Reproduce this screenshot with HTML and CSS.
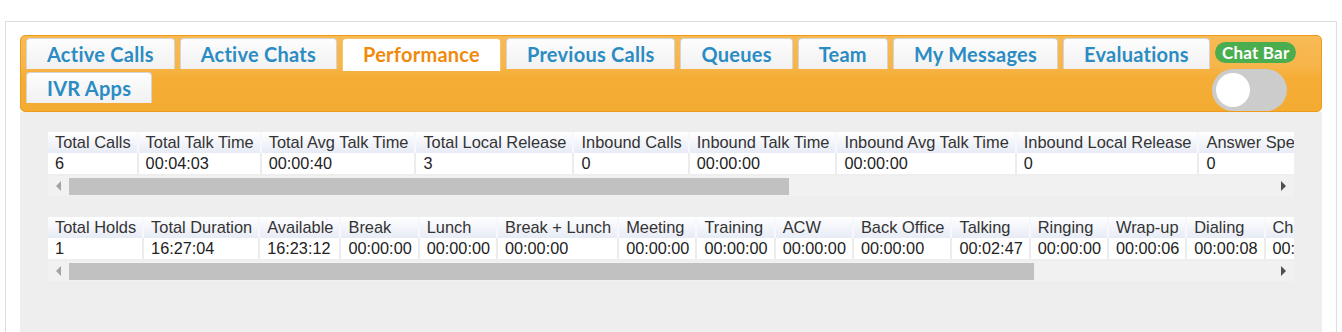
FILE: index.html
```html
<!DOCTYPE html>
<html lang="en">
<head>
    <meta charset="UTF-8">
    <meta name="viewport" content="width=device-width, initial-scale=1.0">
    <title>Agent Performance</title>
    <link rel="stylesheet" href="styles.css">
</head>
<body>
    <div class="frame">
        <div class="tabbar">
            <ul class="tabs">
                <li class="tab">Active Calls</li>
                <li class="tab">Active Chats</li>
                <li class="tab active">Performance</li>
                <li class="tab">Previous Calls</li>
                <li class="tab">Queues</li>
                <li class="tab">Team</li>
                <li class="tab">My Messages</li>
                <li class="tab">Evaluations</li>
                <li class="tab">IVR Apps</li>
            </ul>
            <div class="chatbar">
                <span class="chatbar-label">Chat Bar</span>
                <label class="switch"><span class="knob"></span></label>
            </div>
        </div>

        <div class="panel">
            <div class="grid">
                <div class="grid-body">
                    <table>
                        <tr>
                            <th>Total Calls</th>
                            <th>Total Talk Time</th>
                            <th>Total Avg Talk Time</th>
                            <th>Total Local Release</th>
                            <th>Inbound Calls</th>
                            <th>Inbound Talk Time</th>
                            <th>Inbound Avg Talk Time</th>
                            <th>Inbound Local Release</th>
                            <th>Answer Speed</th>
                        </tr>
                        <tr>
                            <td>6</td>
                            <td>00:04:03</td>
                            <td>00:00:40</td>
                            <td>3</td>
                            <td>0</td>
                            <td>00:00:00</td>
                            <td>00:00:00</td>
                            <td>0</td>
                            <td>0</td>
                        </tr>
                    </table>
                </div>
                <div class="scrollbar">
                    <span class="arrow left"></span>
                    <div class="track"><div class="thumb" style="width: 720px"></div></div>
                    <span class="arrow right"></span>
                </div>
            </div>

            <div class="grid">
                <div class="grid-body">
                    <table>
                        <tr>
                            <th>Total Holds</th>
                            <th>Total Duration</th>
                            <th>Available</th>
                            <th>Break</th>
                            <th>Lunch</th>
                            <th>Break + Lunch</th>
                            <th>Meeting</th>
                            <th>Training</th>
                            <th>ACW</th>
                            <th>Back Office</th>
                            <th>Talking</th>
                            <th>Ringing</th>
                            <th>Wrap-up</th>
                            <th>Dialing</th>
                            <th>Chat</th>
                        </tr>
                        <tr>
                            <td>1</td>
                            <td>16:27:04</td>
                            <td>16:23:12</td>
                            <td>00:00:00</td>
                            <td>00:00:00</td>
                            <td>00:00:00</td>
                            <td>00:00:00</td>
                            <td>00:00:00</td>
                            <td>00:00:00</td>
                            <td>00:00:00</td>
                            <td>00:02:47</td>
                            <td>00:00:00</td>
                            <td>00:00:06</td>
                            <td>00:00:08</td>
                            <td>00:00:00</td>
                        </tr>
                    </table>
                </div>
                <div class="scrollbar">
                    <span class="arrow left"></span>
                    <div class="track"><div class="thumb" style="width: 965px"></div></div>
                    <span class="arrow right"></span>
                </div>
            </div>
        </div>
    </div>
</body>
</html>
```

FILE: styles.css
```css
body {
    margin: 0;
    background: #fff;
    font-family: "Liberation Sans", Arial, sans-serif;
}

.frame {
    margin: 21px 5px 0 5px;
    border: 1px solid #dedede;
    border-bottom: none;
    padding: 13px 14px 0 14px;
    background: #fff;
}

/* orange tab strip */
.tabbar {
    display: flex;
    align-items: flex-start;
    padding: 2px 24px 0 5px;
    border: 1px solid #ec9b1c;
    border-radius: 5px;
    background: linear-gradient(to bottom, #f8ba55 0%, #f7b54a 40%, #f5ad36 55%, #f4ab32 100%);
}

.tabs {
    flex: 1;
    display: flex;
    flex-wrap: wrap;
    list-style: none;
    margin: 0;
    padding: 0 0 5px 0;
}

.tab {
    height: 30px;
    line-height: 30px;
    margin: 0 5px 3px 0;
    padding: 0 20px;
    border: 1px solid #d4d4d4;
    border-bottom: none;
    border-radius: 4px 4px 0 0;
    background: linear-gradient(to bottom, #fdfdfd, #f1f1f1);
    color: #2b8cc4;
    font-family: Lato, "Open Sans", sans-serif;
    font-weight: bold;
    font-size: 20px;
    letter-spacing: 0.25px;
    white-space: nowrap;
}

.tab.active {
    height: 32px;
    margin-bottom: 1px;
    background: #fff;
    border-color: #f3c46e;
    color: #f08a0b;
}

.chatbar {
    width: 82px;
    display: flex;
    flex-direction: column;
    align-items: flex-start;
}

.chatbar-label {
    margin-top: 4px;
    height: 21px;
    line-height: 21px;
    padding: 0 7px;
    border-radius: 11px;
    background: #4aae4e;
    color: #fff;
    font-family: Lato, "Open Sans", sans-serif;
    font-weight: bold;
    font-size: 17px;
    letter-spacing: 0.2px;
    white-space: nowrap;
}

.switch {
    display: flex;
    align-items: center;
    margin: 6px 0 0 -3px;
    width: 75px;
    height: 42px;
    border-radius: 21px;
    background: #cccccc;
}

.knob {
    width: 34px;
    height: 34px;
    margin-left: 4px;
    border-radius: 50%;
    background: #fff;
}

/* stats panel */
.panel {
    min-height: 240px;
    padding: 20px 28px;
    background: #eeeeee;
}

.grid {
    margin-bottom: 21px;
}

.grid-body {
    overflow: hidden;
}

table {
    border-collapse: separate;
    border-spacing: 0;
    white-space: nowrap;
    color: #333;
}

th {
    height: 21px;
    padding: 0 6px 0 7px;
    font-size: 16.4px;
    font-weight: normal;
    text-align: left;
    background: linear-gradient(to bottom, #ffffff, #e7ebf5);
    border-right: 2px solid #f7f8fb;
}

td {
    height: 21px;
    padding: 0 6px 0 7px;
    font-size: 16.25px;
    background: #fff;
    color: #222;
    border-right: 2px solid #ececec;
}

.scrollbar {
    display: flex;
    align-items: center;
    height: 20px;
    margin-top: 2px;
    background: #f1f1f1;
}

.track {
    flex: 1;
    height: 17px;
}

.thumb {
    height: 17px;
    background: #c1c1c1;
}

.arrow {
    width: 0;
    height: 0;
    border-top: 5px solid transparent;
    border-bottom: 5px solid transparent;
}

.arrow.left {
    margin: 0 8px 0 8px;
    border-right: 5px solid #a3a3a3;
}

.arrow.right {
    margin: 0 8px 0 6px;
    border-left: 5px solid #505050;
}
```
